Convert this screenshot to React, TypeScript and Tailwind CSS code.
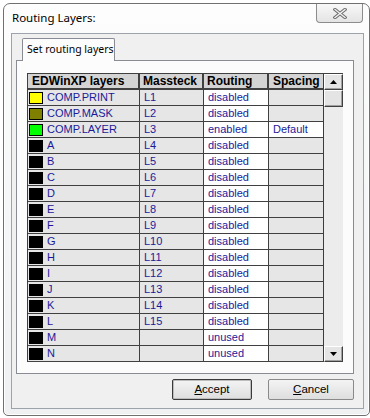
import React from "react";

type Row = { name: string; color: string; mass: string; routing: string; spacing?: string };

const rows: Row[] = [
  { name: "COMP.PRINT", color: "#ffff00", mass: "L1", routing: "disabled" },
  { name: "COMP.MASK", color: "#808000", mass: "L2", routing: "disabled" },
  { name: "COMP.LAYER", color: "#00ff00", mass: "L3", routing: "enabled", spacing: "Default" },
  { name: "A", color: "#000000", mass: "L4", routing: "disabled" },
  { name: "B", color: "#000000", mass: "L5", routing: "disabled" },
  { name: "C", color: "#000000", mass: "L6", routing: "disabled" },
  { name: "D", color: "#000000", mass: "L7", routing: "disabled" },
  { name: "E", color: "#000000", mass: "L8", routing: "disabled" },
  { name: "F", color: "#000000", mass: "L9", routing: "disabled" },
  { name: "G", color: "#000000", mass: "L10", routing: "disabled" },
  { name: "H", color: "#000000", mass: "L11", routing: "disabled" },
  { name: "I", color: "#000000", mass: "L12", routing: "disabled" },
  { name: "J", color: "#000000", mass: "L13", routing: "disabled" },
  { name: "K", color: "#000000", mass: "L14", routing: "disabled" },
  { name: "L", color: "#000000", mass: "L15", routing: "disabled" },
  { name: "M", color: "#000000", mass: "", routing: "unused" },
  { name: "N", color: "#000000", mass: "", routing: "unused" },
];

const sans = "font-['Noto_Sans','Open_Sans',sans-serif]";
const grid = "font-['Liberation_Sans',Arial,sans-serif]";

function Arrow({ up }: { up?: boolean }) {
  return (
    <svg width="7" height="4" viewBox="0 0 7 4">
      <path d={up ? "M0 4 L3.5 0 L7 4 Z" : "M0 0 L3.5 4 L7 0 Z"} fill="#000" />
    </svg>
  );
}

function Scrollbar() {
  const btn =
    "flex h-4 items-center justify-center border border-t-white border-l-white border-r-[#404040] border-b-[#404040] bg-[#e4e4e4] shadow-[inset_-1px_-1px_0_#a0a0a0]";
  return (
    <div className="flex w-[19px] flex-col bg-[#ececec]">
      <div className={btn}>
        <Arrow up />
      </div>
      <div className="h-[17px] border border-t-white border-l-white border-r-[#404040] border-b-[#404040] bg-[#e4e4e4] shadow-[inset_-1px_-1px_0_#a0a0a0]" />
      <div className="flex-1" />
      <div className={btn}>
        <Arrow />
      </div>
    </div>
  );
}

export default function App() {
  return (
    <div className="h-[418px] w-[370px] overflow-hidden bg-white">
      <div className="ml-[3px] mt-[3px] flex h-[413px] w-[367px] flex-col rounded-t-[7px] rounded-b-[5px] border border-[#707070] bg-linear-to-b from-[#fdfdfd] to-[#eef0f2] pl-[7px] pr-[5px] shadow-[inset_0_0_0_1px_#ffffff]">
        {/* title bar */}
        <div className="flex h-[29px] items-start justify-between">
          <div className={`${sans} pl-[1px] pt-[8px] text-[11.5px] leading-none text-black`}>Routing Layers:</div>
          <div className="mr-[1px] flex h-[19px] w-[47px] items-center justify-center rounded-b-[4px] border border-t-0 border-[#8c8c8c] bg-linear-to-b from-[#f8f8f8] to-[#e4e4e4]">
            <svg width="14" height="11" viewBox="0 0 14 11">
              <path d="M2 1.5 L12 9.5 M12 1.5 L2 9.5" stroke="#6e6e6e" strokeWidth="3.4" strokeLinecap="square" />
              <path d="M2 1.5 L12 9.5 M12 1.5 L2 9.5" stroke="#f4f4f4" strokeWidth="1.3" strokeLinecap="square" />
            </svg>
          </div>
        </div>

        {/* client area */}
        <div className="mb-[6px] flex flex-1 flex-col border border-[#9da3aa] bg-[#f0f0f0] pl-[4px] pr-[9px] pt-[4px]">
          <div className="flex">
            <div className={`${sans} relative z-10 -mb-px ml-[6px] flex h-[23px] w-[93px] items-center whitespace-nowrap rounded-t-[2px] border border-b-0 border-[#898c95] bg-[#fcfcfc] pl-[4px] text-[10.5px] text-black`}>
              Set routing layers
            </div>
          </div>
          <div className="h-[314px] w-[338px] border border-[#898c95] bg-[#fcfcfc] pl-[10px] pt-[12px]">
            <div className={`${grid} flex w-[316px] border-l border-t border-[#404040] text-[11px] leading-none`}>
              <div className="w-[296px]">
                <div className="flex h-4 bg-[#d4d4d4] text-[12px] font-bold text-black">
                  <div className="flex w-[112px] items-center border-b-2 border-r-2 border-[#404040] pl-[4px]">EDWinXP layers</div>
                  <div className="flex w-[64px] items-center border-b-2 border-r-2 border-[#404040] pl-[3px]">Massteck</div>
                  <div className="flex w-[65px] items-center border-b-2 border-r-2 border-[#404040] pl-[3px]">Routing</div>
                  <div className="flex w-[55px] items-center border-b-2 border-r border-b-[#404040] border-r-[#8b1a1a] pl-[4px]">Spacing</div>
                </div>
                {rows.map((r) => (
                  <div key={r.name} className="flex h-4 text-[#1a1a9a]">
                    <div className="flex w-[112px] items-center border-b border-r border-[#404040] bg-[#e6e6e6] pl-[1px]">
                      <span className="h-[12px] w-[14px] border border-black" style={{ backgroundColor: r.color }} />
                      <span className="pl-[4px]">{r.name}</span>
                    </div>
                    <div className="flex w-[64px] items-center border-b border-r border-[#404040] bg-[#e6e6e6] pl-[4px]">{r.mass}</div>
                    <div className="flex w-[65px] items-center border-b border-r border-[#404040] bg-white pl-[4px]">{r.routing}</div>
                    <div
                      className={`flex w-[55px] items-center border-b border-r border-b-[#404040] border-r-[#8b1a1a] pl-[4px] ${
                        r.spacing ? "bg-white" : "bg-[#e6e6e6]"
                      }`}
                    >
                      {r.spacing}
                    </div>
                  </div>
                ))}
              </div>
              <Scrollbar />
            </div>
          </div>

          {/* buttons */}
          <div className={`${grid} mt-[5px] flex justify-end gap-[16px] text-[11.5px] text-black`}>
            <button className="flex h-[21px] w-[80px] items-center justify-center rounded-[2px] border border-[#3a3a3a] bg-linear-to-b from-[#f4f4f4] to-[#dedede] shadow-[inset_0_0_0_1px_#bcbcbc]">
              <span>
                <span className="underline">A</span>ccept
              </span>
            </button>
            <button className="flex h-[21px] w-[86px] items-center justify-center rounded-[2px] border border-[#8a8a8a] bg-linear-to-b from-[#f4f4f4] to-[#dedede]">
              <span>
                <span className="underline">C</span>ancel
              </span>
            </button>
          </div>
        </div>
      </div>
    </div>
  );
}
